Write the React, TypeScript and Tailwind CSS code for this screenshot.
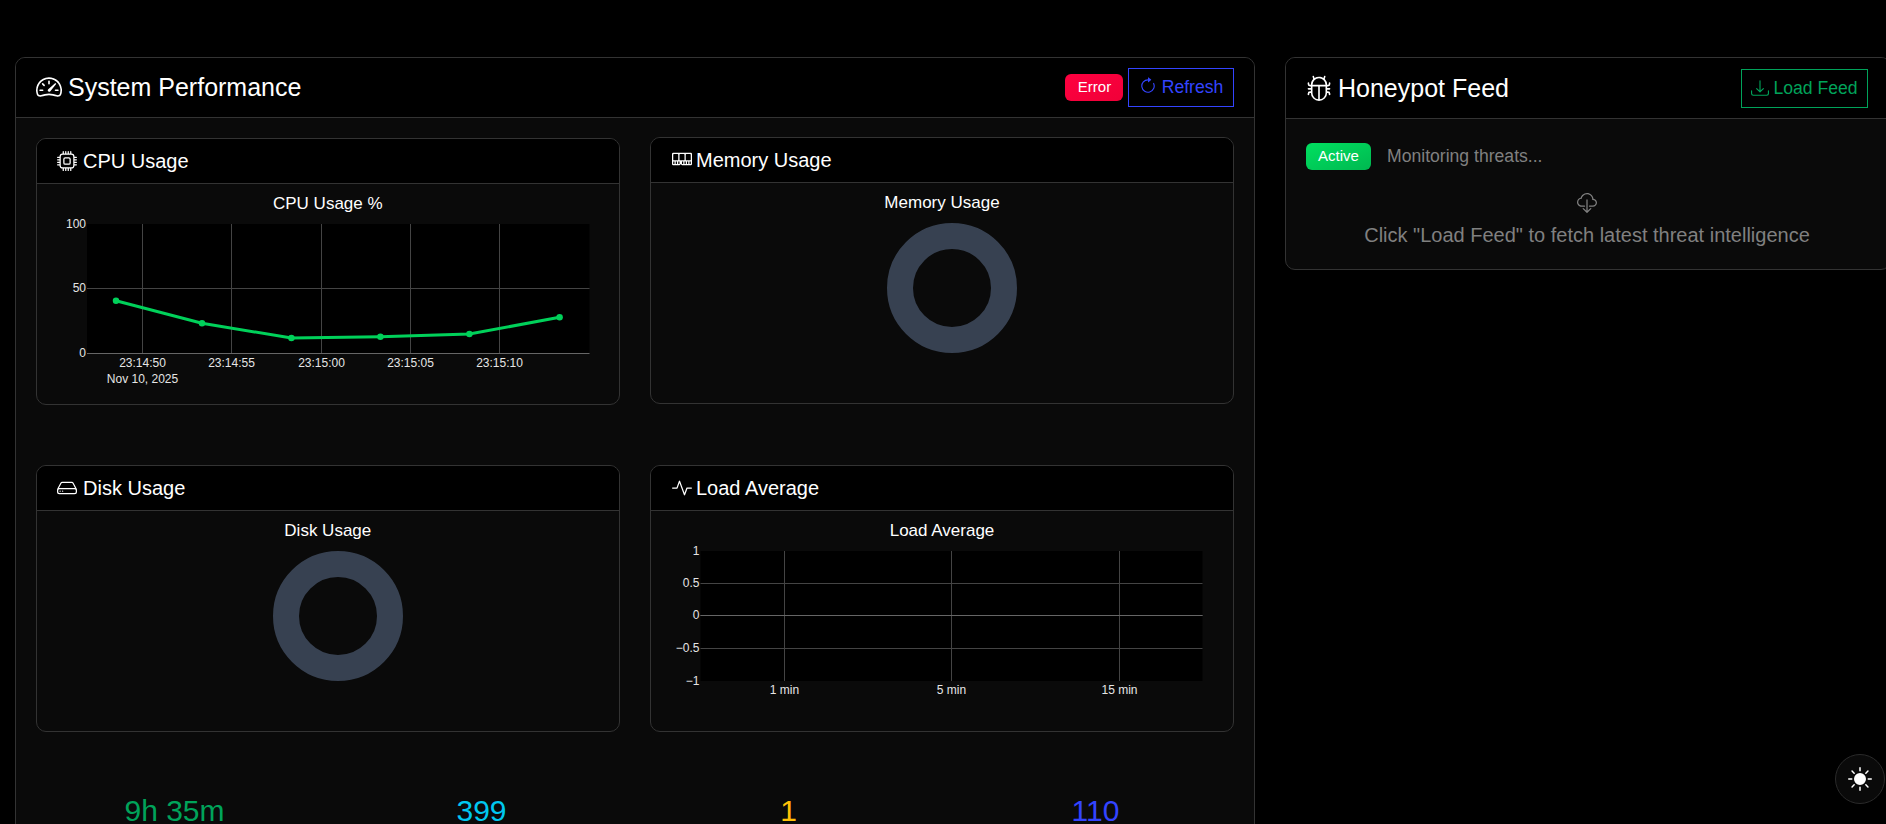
import React from "react";
import { BsSpeedometer2, BsCpu, BsMemory, BsHdd, BsActivity, BsBug, BsArrowClockwise, BsDownload, BsCloudDownload, BsSunFill } from "react-icons/bs";

const AX = "#444444";

function Tick(p: { x: number; y: number; a?: "middle" | "end"; children: React.ReactNode }) {
  return (
    <text x={p.x} y={p.y} textAnchor={p.a ?? "middle"} fontSize={12} fill="#e5e5e5">
      {p.children}
    </text>
  );
}

function CpuChart() {
  const ox = 37, oy = 184;
  const L = 87 - ox, R = 589.5 - ox, T = 224 - oy, B = 353.5 - oy;
  const xs = [142.5, 231.5, 321.5, 410.5, 499.5].map((v) => v - ox);
  const labels = ["23:14:50", "23:14:55", "23:15:00", "23:15:05", "23:15:10"];
  const pts: [number, number][] = [[116, 300.7], [202, 323.3], [291.4, 338], [380.4, 336.7], [469.4, 334], [559.6, 317.3]].map(([x, y]) => [x - ox, y - oy]);
  return (
    <svg className="block w-full h-[220px]" style={{ fontFamily: '"Liberation Sans", Arial, sans-serif' }}>
      <text x={327.8 - ox} y={209 - oy} textAnchor="middle" fontSize={17} fill="#ffffff">CPU Usage %</text>
      <rect x={L} y={T} width={R - L} height={B - T} fill="#000000" />
      {xs.map((x) => <line key={x} x1={x} x2={x} y1={T} y2={B} stroke={AX} />)}
      <line x1={L} x2={R} y1={288.5 - oy} y2={288.5 - oy} stroke={AX} />
      <line x1={L} x2={R} y1={B} y2={B} stroke="#666666" />
      <Tick x={L - 1} y={T + 4} a="end">100</Tick>
      <Tick x={L - 1} y={288 - oy + 4} a="end">50</Tick>
      <Tick x={L - 1} y={353 - oy + 4} a="end">0</Tick>
      {xs.map((x, i) => <Tick key={x} x={x} y={367 - oy}>{labels[i]}</Tick>)}
      <Tick x={xs[0]} y={383 - oy}>Nov 10, 2025</Tick>
      <polyline points={pts.map((p) => p.join(",")).join(" ")} fill="none" stroke="#00d15a" strokeWidth={3} />
      {pts.map(([x, y]) => <circle key={x} cx={x} cy={y} r={3.25} fill="#00d15a" />)}
    </svg>
  );
}

function LoadChart() {
  const ox = 651, oy = 511;
  const L = 700.5 - ox, R = 1202.5 - ox, T = 551 - oy, B = 681 - oy;
  const xs = [784.5, 951.5, 1119.5].map((v) => v - ox);
  const ys = [583.5, 615.5, 648.5].map((v) => v - oy);
  return (
    <svg className="block w-full h-[220px]" style={{ fontFamily: '"Liberation Sans", Arial, sans-serif' }}>
      <text x={942 - ox} y={536 - oy} textAnchor="middle" fontSize={17} fill="#ffffff">Load Average</text>
      <rect x={L} y={T} width={R - L} height={B - T} fill="#000000" />
      {xs.map((x) => <line key={x} x1={x} x2={x} y1={T} y2={B} stroke={AX} />)}
      {ys.map((y) => <line key={y} x1={L} x2={R} y1={y} y2={y} stroke={AX} />)}
      <line x1={L} x2={R} y1={ys[1]} y2={ys[1]} stroke="#666666" />
      {["1", "0.5", "0", "−0.5", "−1"].map((t, i) => (
        <Tick key={t} x={L - 1} y={[T, ys[0] - 0.5, ys[1] - 0.5, ys[2] - 0.5, B][i] + 4} a="end">{t}</Tick>
      ))}
      {["1 min", "5 min", "15 min"].map((t, i) => <Tick key={t} x={xs[i]} y={694 - oy}>{t}</Tick>)}
    </svg>
  );
}

function Donut(p: { title: string; titleX: number; cx: number; oy: number; titleY: number; cy: number; ox: number }) {
  return (
    <svg className="block w-full h-[220px]" style={{ fontFamily: '"Liberation Sans", Arial, sans-serif' }}>
      <text x={p.titleX - p.ox} y={p.titleY - p.oy} textAnchor="middle" fontSize={17} fill="#ffffff">{p.title}</text>
      <circle cx={p.cx - p.ox} cy={p.cy - p.oy} r={52} fill="none" stroke="#374151" strokeWidth={26} />
    </svg>
  );
}

function ChartCard(p: { icon: React.ReactNode; title: string; className?: string; children: React.ReactNode }) {
  return (
    <div className={`border border-[#333333] rounded-[10px] bg-[#0a0a0a] overflow-hidden h-[267px] ${p.className ?? ""}`}>
      <div className="h-[45px] bg-black border-b border-[#333333] px-5 flex items-center gap-[5px] text-[20px] leading-6 text-white">
        {p.icon}
        <span>{p.title}</span>
      </div>
      {p.children}
    </div>
  );
}

function Stat(p: { value: string; className: string }) {
  return <div className={`text-center text-[30px] leading-[27px] ${p.className}`}>{p.value}</div>;
}

export default function App() {
  return (
    <div className="h-[824px] overflow-hidden bg-black text-white pt-[57px] pl-[15px] flex gap-[30px] font-['Liberation_Sans',Arial,sans-serif]">
      <div className="w-[1240px] h-[900px] shrink-0 border border-[#333333] rounded-[10px] bg-[#0a0a0a] overflow-hidden">
        <div className="h-[60px] bg-black border-b border-[#333333] px-5 flex items-center justify-between">
          <div className="flex items-center gap-[6px] text-[25px] leading-8 text-white -mt-px">
            <BsSpeedometer2 className="w-[26px] h-[26px]" />
            <span>System Performance</span>
          </div>
          <div className="flex items-center gap-[5px]">
            <span className="w-[58px] h-[27px] rounded-md bg-gradient-to-br from-[#ff0040] to-[#f00038] text-[15px] flex items-center justify-center text-white pl-px">Error</span>
            <button className="w-[106px] h-[39px] border border-[#3344ff] text-[#3344ff] text-[17.6px] flex items-center justify-center gap-[5px]">
              <BsArrowClockwise className="w-[18px] h-[18px] -mt-[3px]" />
              Refresh
            </button>
          </div>
        </div>
        <div className="px-5 pt-[19px]">
          <div className="grid grid-cols-2 gap-x-[30px]">
            <ChartCard className="mt-px" title="CPU Usage" icon={<BsCpu className="w-5 h-5 mr-px" />}>
              <CpuChart />
            </ChartCard>
            <ChartCard title="Memory Usage" icon={<BsMemory className="w-5 h-5 -mt-[2px] ml-px -mr-px" />}>
              <Donut title="Memory Usage" titleX={942} titleY={208} cx={952} cy={288} ox={651} oy={183} />
            </ChartCard>
            <ChartCard className="mt-[60px]" title="Disk Usage" icon={<BsHdd className="w-5 h-5 mr-px" />}>
              <Donut title="Disk Usage" titleX={327.8} titleY={536} cx={338} cy={616} ox={37} oy={511} />
            </ChartCard>
            <ChartCard className="mt-[60px]" title="Load Average" icon={<BsActivity className="w-5 h-5 ml-px -mr-px" />}>
              <LoadChart />
            </ChartCard>
          </div>
          <div className="grid grid-cols-4 -mx-[15px] mt-[65px]">
            <Stat value="9h 35m" className="text-[#00a35a]" />
            <Stat value="399" className="text-[#00c8f0]" />
            <Stat value="1" className="text-[#ffc107]" />
            <Stat value="110" className="text-[#3344ff]" />
          </div>
        </div>
      </div>
      <div className="w-[606px] h-[213px] shrink-0 border border-[#333333] rounded-[10px] bg-[#0a0a0a] overflow-hidden">
        <div className="h-[61px] bg-black border-b border-[#333333] pl-5 pr-[22px] flex items-center justify-between">
          <div className="flex items-center gap-[6px] text-[25px] leading-8 text-white">
            <BsBug className="w-[26px] h-[26px]" />
            <span>Honeypot Feed</span>
          </div>
          <button className="w-[127px] h-[39px] border border-[#00a35a] text-[#00a35a] text-[17.6px] flex items-center justify-center gap-[4px]">
            <BsDownload className="w-[18px] h-[18px]" />
            Load Feed
          </button>
        </div>
        <div className="pl-5 pr-[22px] pt-6">
          <div className="flex items-center gap-4">
            <span className="w-[65px] h-[27px] rounded-md bg-gradient-to-br from-[#00e060] to-[#00b850] text-[15px] flex items-center justify-center text-white">Active</span>
            <span className="text-[17.6px] text-[#808080]">Monitoring threats...</span>
          </div>
          <div className="flex flex-col items-center mt-[23px] text-[#808080]">
            <BsCloudDownload className="w-5 h-5" />
            <div className="text-[20px] leading-6 mt-[10px]">Click "Load Feed" to fetch latest threat intelligence</div>
          </div>
        </div>
      </div>
      <button className="fixed left-[1835px] top-[754px] w-[50px] h-[50px] rounded-full bg-[#0a0a0a] border border-[#2a2a2a] flex items-center justify-center text-white">
        <BsSunFill className="w-6 h-6" />
      </button>
    </div>
  );
}
